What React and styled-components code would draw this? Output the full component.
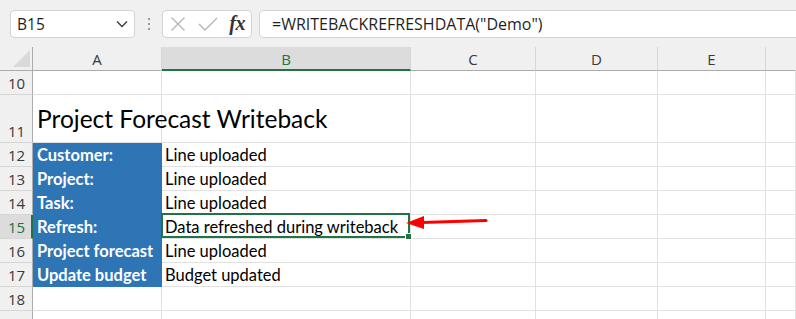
import React from "react";
import styled, { createGlobalStyle } from "styled-components";

const GlobalStyle = createGlobalStyle`
  html, body { margin: 0; padding: 0; background: #ffffff; }
  body { width: 796px; height: 319px; overflow: hidden; }
`;

const UI_FONT = `"Open Sans", "Noto Sans", "Liberation Sans", sans-serif`;
const CELL_FONT = `Lato, "Liberation Sans", sans-serif`;
const GREEN = "#217346";
const GRID = "#e1e1e1";

const Window = styled.div`
  width: 796px;
  height: 319px;
  overflow: hidden;
  background: #ffffff;
  display: flex;
  flex-direction: column;
`;

const FormulaBar = styled.div`
  flex: 0 0 47px;
  height: 47px;
  box-sizing: border-box;
  background: #f0f0f0;
  display: flex;
  align-items: flex-start;
  padding: 10px 0 0 10px;
  overflow: hidden;
  font-family: ${UI_FONT};
`;

const Field = styled.div`
  flex-shrink: 0;
  height: 28px;
  box-sizing: border-box;
  background: #ffffff;
  border: 1px solid #d4d4d4;
  border-radius: 4px;
  display: flex;
  align-items: center;
`;

const NameBox = styled(Field)`
  width: 125px;
  padding: 0 6px 0 6px;
  justify-content: space-between;
  font-size: 15.5px;
  color: #1f1f1f;
`;

const Grip = styled.div`
  flex-shrink: 0;
  width: 27px;
  height: 28px;
  display: flex;
  flex-direction: column;
  align-items: center;
  justify-content: center;
  gap: 3px;
`;

const Dot = styled.span`
  width: 2px;
  height: 2px;
  background: #9a9a9a;
`;

const ButtonGroup = styled(Field)`
  width: 90px;
  padding: 0 6px 0 7px;
  justify-content: space-between;
`;

const Fx = styled.span`
  font-family: "Liberation Serif", "DejaVu Serif", serif;
  font-style: italic;
  font-weight: bold;
  font-size: 20px;
  color: #333333;
  letter-spacing: -0.5px;
  margin-top: -2px;
`;

const FormulaInput = styled(Field)`
  flex: 0 0 560px;
  margin-left: 7px;
  padding-left: 12px;
  font-size: 16px;
  color: #1f1f1f;
  white-space: nowrap;
`;

const Sheet = styled.div`
  position: relative;
  flex: 1 1 auto;
  min-height: 0;
  overflow: hidden;
  display: grid;
  grid-template-columns: 33px 129px 249px 125px 122px 108px 1fr;
  grid-template-rows: 24px 24px 48px repeat(6, 24px) 24px 24px;
`;

const HeaderCell = styled.div`
  box-sizing: border-box;
  background: ${(p) => (p.$selected ? "#dcdcdc" : "#f0f0f0")};
  border-right: 1px solid ${(p) => (p.$last ? "transparent" : "#d6d6d6")};
  border-bottom: ${(p) => (p.$selected ? `2px solid ${GREEN}` : "1px solid #acacac")};
  display: flex;
  align-items: center;
  justify-content: center;
  padding-top: 1px;
  font-family: ${UI_FONT};
  font-size: 15px;
  color: ${(p) => (p.$selected ? GREEN : "#3a3a3a")};
`;

const Corner = styled.div`
  box-sizing: border-box;
  background: #f0f0f0;
  border-right: 1px solid #acacac;
  border-bottom: 1px solid #acacac;
  display: flex;
  align-items: flex-end;
  justify-content: flex-end;
  padding: 0 2px 3px 0;
`;

const CornerTriangle = styled.span`
  width: 17px;
  height: 17px;
  background: #d9d9d9;
  clip-path: polygon(100% 0, 100% 100%, 0 100%);
`;

const RowHeader = styled.div`
  box-sizing: border-box;
  background: ${(p) => (p.$selected ? "#dcdcdc" : "#f0f0f0")};
  border-right: ${(p) => (p.$selected ? `2px solid ${GREEN}` : "1px solid #acacac")};
  border-bottom: 1px solid #d6d6d6;
  display: flex;
  align-items: flex-end;
  padding: 0 0 1px 8px;
  font-family: ${UI_FONT};
  font-size: 15px;
  line-height: 20px;
  color: ${(p) => (p.$selected ? GREEN : "#3a3a3a")};
`;

const Cell = styled.div`
  position: relative;
  box-sizing: border-box;
  background: ${(p) => (p.$fill ? "#2e75b6" : "#ffffff")};
  border-right: 1px solid ${(p) => (p.$fill ? "#2e75b6" : GRID)};
  border-bottom: 1px solid ${(p) => (p.$fill ? "#2e75b6" : GRID)};
  display: flex;
  align-items: flex-end;
  padding: 0 0 ${(p) => (p.$title ? "8px" : "1px")} ${(p) => (p.$fill || p.$title ? "4px" : "3px")};
  font-family: ${CELL_FONT};
  font-size: ${(p) => (p.$title ? "24.5px" : "16.5px")};
  font-weight: ${(p) => (p.$fill ? 700 : 400)};
  line-height: ${(p) => (p.$title ? "30px" : "20px")};
  color: ${(p) => (p.$fill ? "#ffffff" : "#000000")};
  white-space: nowrap;
  overflow: ${(p) => (p.$active ? "visible" : "hidden")};
  z-index: ${(p) => (p.$active ? 2 : "auto")};
`;

const SelectionFrame = styled.span`
  position: absolute;
  left: -1px;
  top: -2px;
  right: 0;
  bottom: 0;
  border: 2px solid ${GREEN};
  pointer-events: none;
`;

const FillHandle = styled.span`
  position: absolute;
  right: -3px;
  bottom: -3px;
  width: 5px;
  height: 5px;
  background: ${GREEN};
  outline: 1px solid #ffffff;
`;

const ArrowLayer = styled.svg`
  position: absolute;
  left: 400px;
  top: 160px;
  width: 95px;
  height: 30px;
  z-index: 3;
  overflow: visible;
`;

const columns = ["A", "B", "C", "D", "E", ""];

const rows = [
  { n: 10, a: "", b: "" },
  { n: 11, title: "Project Forecast Writeback" },
  { n: 12, a: "Customer:", b: "Line uploaded" },
  { n: 13, a: "Project:", b: "Line uploaded" },
  { n: 14, a: "Task:", b: "Line uploaded" },
  { n: 15, a: "Refresh:", b: "Data refreshed during writeback", active: true },
  { n: 16, a: "Project forecast", b: "Line uploaded" },
  { n: 17, a: "Update budget", b: "Budget updated" },
  { n: 18, a: "", b: "" },
  { n: 19, a: "", b: "" },
];

const ChevronIcon = () => (
  <svg width="12" height="8" viewBox="0 0 12 8">
    <path d="M1 1.5 L6 6.5 L11 1.5" fill="none" stroke="#3a3a3a" strokeWidth="1.3" />
  </svg>
);

const CancelIcon = () => (
  <svg width="16" height="16" viewBox="0 0 16 16">
    <path d="M1.5 1.5 L14.5 14.5 M14.5 1.5 L1.5 14.5" stroke="#b4b4b4" strokeWidth="1.3" fill="none" />
  </svg>
);

const CheckIcon = () => (
  <svg width="20" height="14" viewBox="0 0 20 14">
    <path d="M1 7 L7 13 L19 1" stroke="#b4b4b4" strokeWidth="1.3" fill="none" />
  </svg>
);

export default function App() {
  return (
    <>
      <GlobalStyle />
      <Window>
        <FormulaBar>
          <NameBox>
            <span>B15</span>
            <ChevronIcon />
          </NameBox>
          <Grip>
            <Dot />
            <Dot />
            <Dot />
          </Grip>
          <ButtonGroup>
            <CancelIcon />
            <CheckIcon />
            <Fx>fx</Fx>
          </ButtonGroup>
          <FormulaInput>=WRITEBACKREFRESHDATA("Demo")</FormulaInput>
        </FormulaBar>
        <Sheet>
          <Corner>
            <CornerTriangle />
          </Corner>
          {columns.map((c, i) => (
            <HeaderCell key={i} $selected={c === "B"} $last={i === columns.length - 1}>
              {c}
            </HeaderCell>
          ))}
          {rows.map((r) => (
            <React.Fragment key={r.n}>
              <RowHeader $selected={r.active}>{r.n}</RowHeader>
              {r.title ? (
                <Cell $title $active>{r.title}</Cell>
              ) : (
                <Cell $fill={!!r.a}>{r.a}</Cell>
              )}
              {r.title ? (
                <Cell />
              ) : (
                <Cell $active={r.active}>
                  {r.b}
                  {r.active && (
                    <SelectionFrame>
                      <FillHandle />
                    </SelectionFrame>
                  )}
                </Cell>
              )}
              <Cell />
              <Cell />
              <Cell />
              <Cell />
            </React.Fragment>
          ))}
          <ArrowLayer viewBox="0 0 95 30">
            <path d="M22 15.5 L86 13.5" stroke="#ff0000" strokeWidth="3.2" strokeLinecap="round" fill="none" />
            <polygon points="6,16 24,9 24,22" fill="#ff0000" />
          </ArrowLayer>
        </Sheet>
      </Window>
    </>
  );
}
